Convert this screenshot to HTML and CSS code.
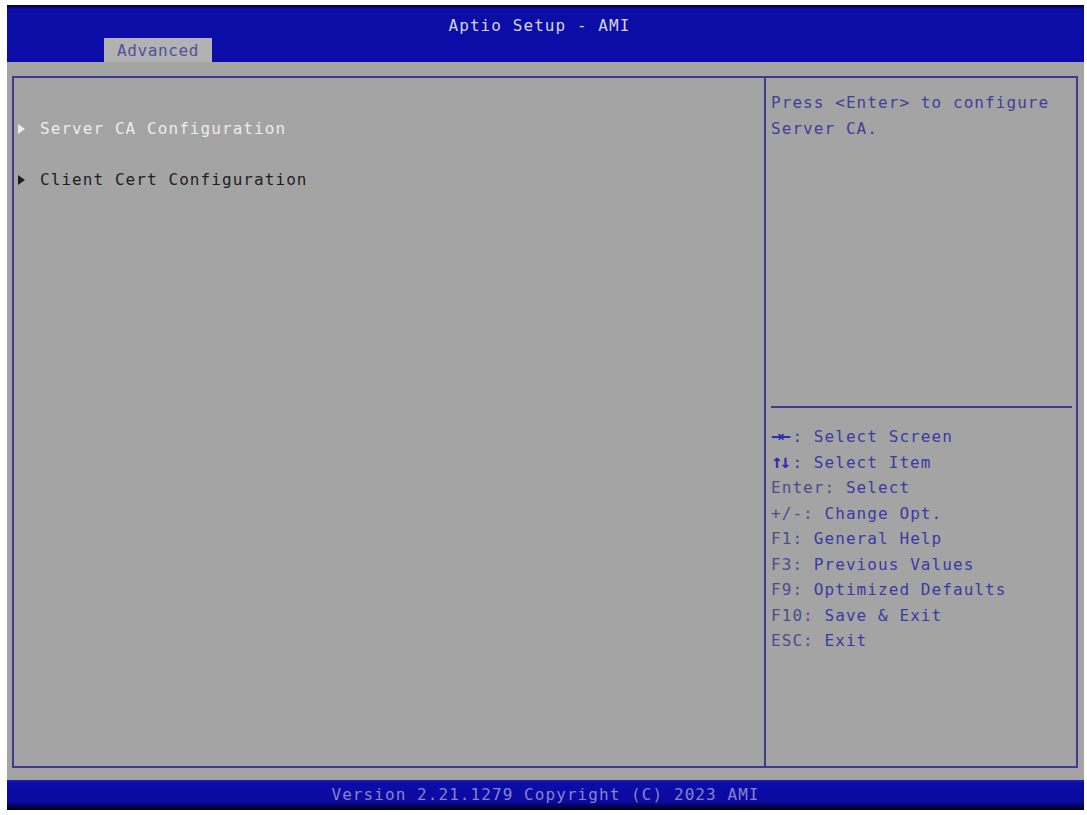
FILE: index.html
```html
<!DOCTYPE html>
<html lang="en">
<head>
    <meta charset="UTF-8">
    <meta name="viewport" content="width=device-width, initial-scale=1.0">
    <title>Aptio Setup - AMI</title>
    <link rel="stylesheet" href="styles.css">
</head>
<body>

    <div class="screen">

        <!-- Title bar and tabs -->
        <div class="header">
            <div class="title">Aptio Setup - AMI</div>
            <div class="tabs">
                <span class="tab">Advanced</span>
            </div>
        </div>

        <!-- Main setup area -->
        <div class="body">
            <div class="frame">
                <div class="menu">
                    <div class="item selected"><span class="arrow"></span>Server CA Configuration</div>
                    <div class="item"><span class="arrow"></span>Client Cert Configuration</div>
                </div>

                <div class="side">
                    <div class="desc">
                        <div>Press &lt;Enter&gt; to configure</div>
                        <div>Server CA.</div>
                    </div>
                    <div class="keys">
                        <div><span class="k">&rarr;&larr;</span>: Select Screen</div>
                        <div><span class="k">&uarr;&darr;</span>: Select Item</div>
                        <div><span class="k2">Enter:</span> Select</div>
                        <div><span class="k2">+/-:</span> Change Opt.</div>
                        <div><span class="k2">F1:</span> General Help</div>
                        <div><span class="k2">F3:</span> Previous Values</div>
                        <div><span class="k2">F9:</span> Optimized Defaults</div>
                        <div><span class="k2">F10:</span> Save &amp; Exit</div>
                        <div><span class="k2">ESC:</span> Exit</div>
                    </div>
                </div>
            </div>
        </div>

        <!-- Footer -->
        <div class="footer">Version 2.21.1279 Copyright (C) 2023 AMI</div>
    </div>

</body>
</html>
```

FILE: styles.css
```css
* {
    margin: 0;
    padding: 0;
    box-sizing: border-box;
}
body {
    background: #ffffff;
    font-family: 'DejaVu Sans Mono', 'Liberation Mono', monospace;
    font-size: 16px;
    letter-spacing: 1.07px;
}
.screen {
    width: 1077px;
    height: 805px;
    margin: 5px 0 0 7px;
    display: flex;
    flex-direction: column;
    background: #a4a4a4;
}
.header {
    height: 57px;
    background: linear-gradient(#000030 0px, #0c0ca6 4px, #0c0ca8 100%);
    display: flex;
    flex-direction: column;
}
.title {
    height: 33px;
    padding-top: 10px;
    padding-right: 12px;
    text-align: center;
    color: #d4d4e4;
    line-height: 22px;
}
.tabs {
    height: 24px;
    padding-left: 97px;
    display: flex;
}
.tab {
    width: 108px;
    background: #b2b2b2;
    color: #50509c;
    text-align: center;
    line-height: 25px;
    letter-spacing: 0.6px;
}
.body {
    flex: 1;
    padding: 14px 6px 12px 5px;
    display: flex;
}
.frame {
    flex: 1;
    border: 2px solid #3c3c8e;
    display: flex;
}
.menu {
    width: 752px;
    border-right: 2px solid #3c3c8e;
    padding: 38px 0 0 4px;
    display: flex;
    flex-direction: column;
    gap: 25.5px;
}
.item {
    line-height: 25.5px;
    color: #1e1e1e;
    display: flex;
    align-items: center;
}
.item.selected {
    color: #ececec;
}
.arrow {
    width: 0;
    height: 0;
    border-left: 7px solid currentColor;
    border-top: 5px solid transparent;
    border-bottom: 5px solid transparent;
    margin-right: 15px;
}
.side {
    flex: 1;
    display: flex;
    flex-direction: column;
}
.desc {
    height: 330px;
    padding: 12px 0 0 0;
    margin: 0 4px 0 5px;
    border-bottom: 2px solid #3c3c8e;
    color: #40409a;
    line-height: 25.5px;
}
.keys {
    padding: 16px 0 0 5px;
    color: #3a3aa4;
    line-height: 25.5px;
}
.k {
    display: inline-block;
    width: 21.4px;
    color: #2e2eb0;
    font-weight: bold;
    font-size: 19px;
    letter-spacing: -3px;
    line-height: 20px;
}
.k2 {
    color: #4c4c8c;
}
.footer {
    height: 30px;
    background: linear-gradient(#2020b8 0px, #0c0ca8 3px, #0a0aa0 22px, #000010 100%);
    color: #8484cc;
    text-align: center;
    line-height: 30px;
}
```
